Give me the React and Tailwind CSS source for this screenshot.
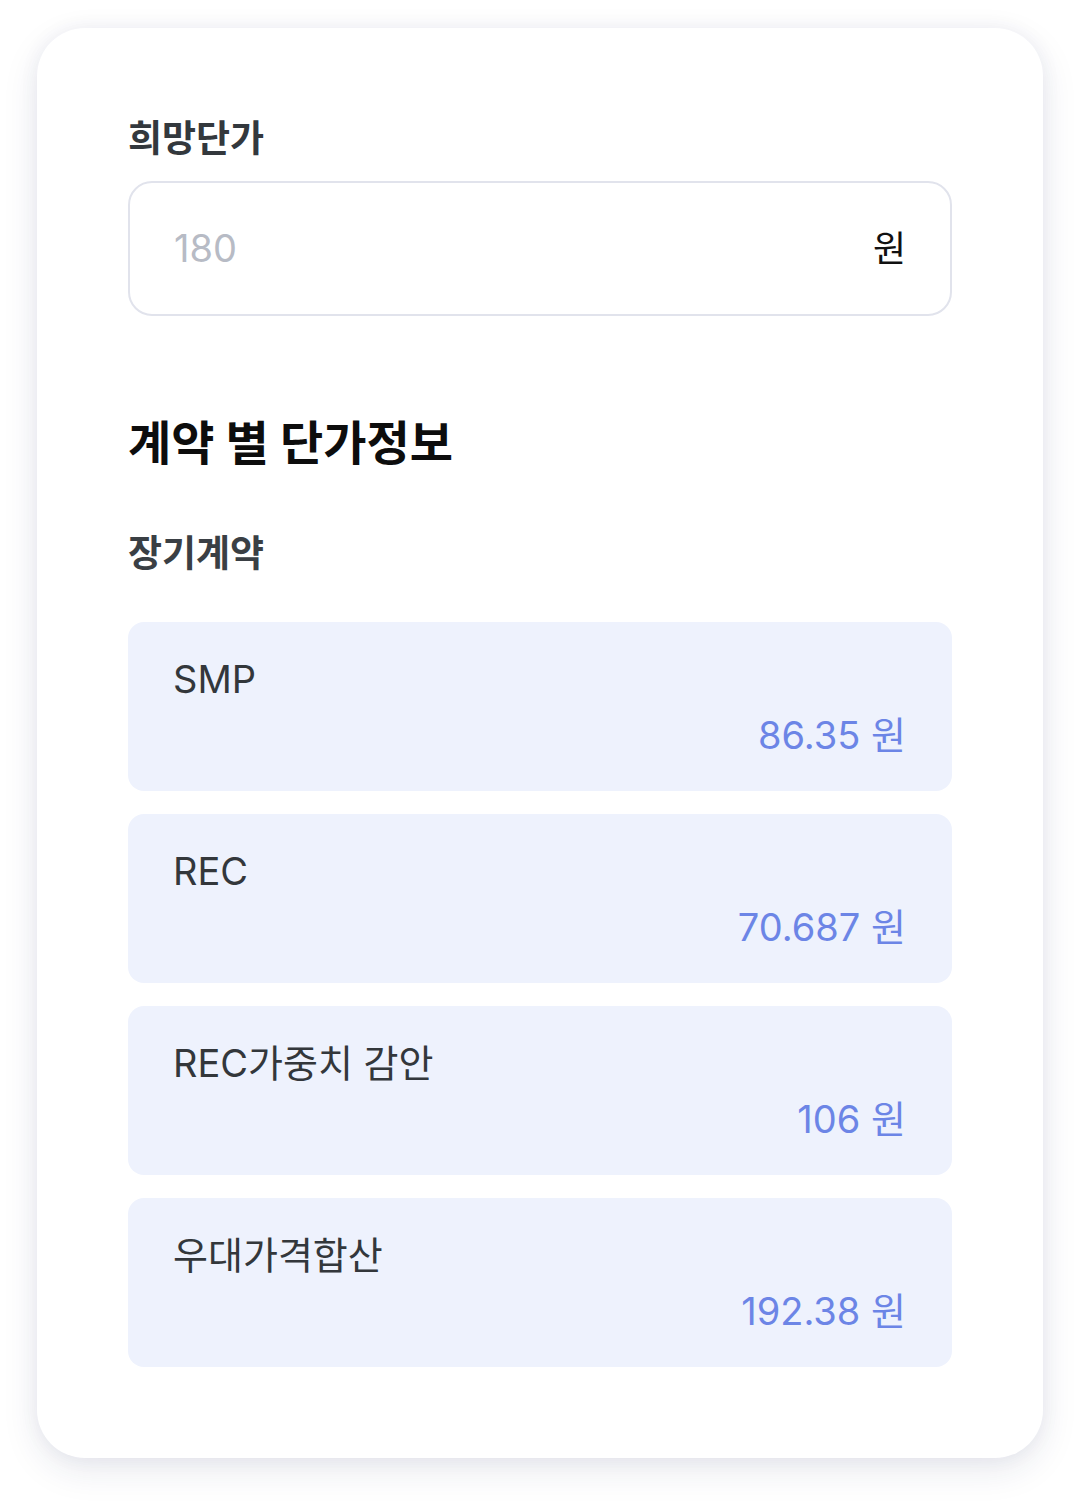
const rows = [
  { label: 'SMP', value: '86.35' },
  { label: 'REC', value: '70.687' },
  { label: 'REC가중치 감안', value: '106' },
  { label: '우대가격합산', value: '192.38' },
];

function PriceRow({ label, value }) {
  return (
    <div className="flex h-[169px] flex-col rounded-[16px] bg-[#eef2fd] pl-[45px] pr-[46px] pt-[32px]">
      <div className="text-[38px] leading-[50px] text-[#33373b]">{label}</div>
      <div className="mt-[6px] text-right text-[38px] leading-[50px] text-[#6c85e6]">
        {value} 원
      </div>
    </div>
  );
}

export default function App() {
  return (
    <div
      className="min-h-[1504px] bg-white px-[37px] pt-[28px] pb-[46px]"
      style={{ fontFamily: 'Inter, "Noto Sans CJK KR", sans-serif' }}
    >
      <div className="rounded-[48px] bg-white px-[91px] pt-[87px] pb-[91px] shadow-[0_12px_36px_rgba(30,40,90,0.10),0_0_20px_rgba(30,40,90,0.05)]">
        <div className="text-[37px] font-bold leading-[48px] text-[#33383d]">희망단가</div>

        <div className="mt-[18px] flex h-[135px] items-center justify-between rounded-[24px] border-2 border-[#e1e3ec] px-[44px]">
          <span className="text-[38px] text-[#b7bbc5]">180</span>
          <span className="text-[36px] text-[#111]">원</span>
        </div>

        <h2 className="mt-[97px] text-[47px] font-bold leading-[60px] text-[#0d0d0d]">계약 별 단가정보</h2>

        <div className="mt-[57px] text-[37px] font-bold leading-[48px] text-[#3a3f44]">장기계약</div>

        <div className="mt-[44px] flex flex-col gap-[23px]">
          {rows.map((r) => (
            <PriceRow key={r.label} {...r} />
          ))}
        </div>
      </div>
    </div>
  );
}
